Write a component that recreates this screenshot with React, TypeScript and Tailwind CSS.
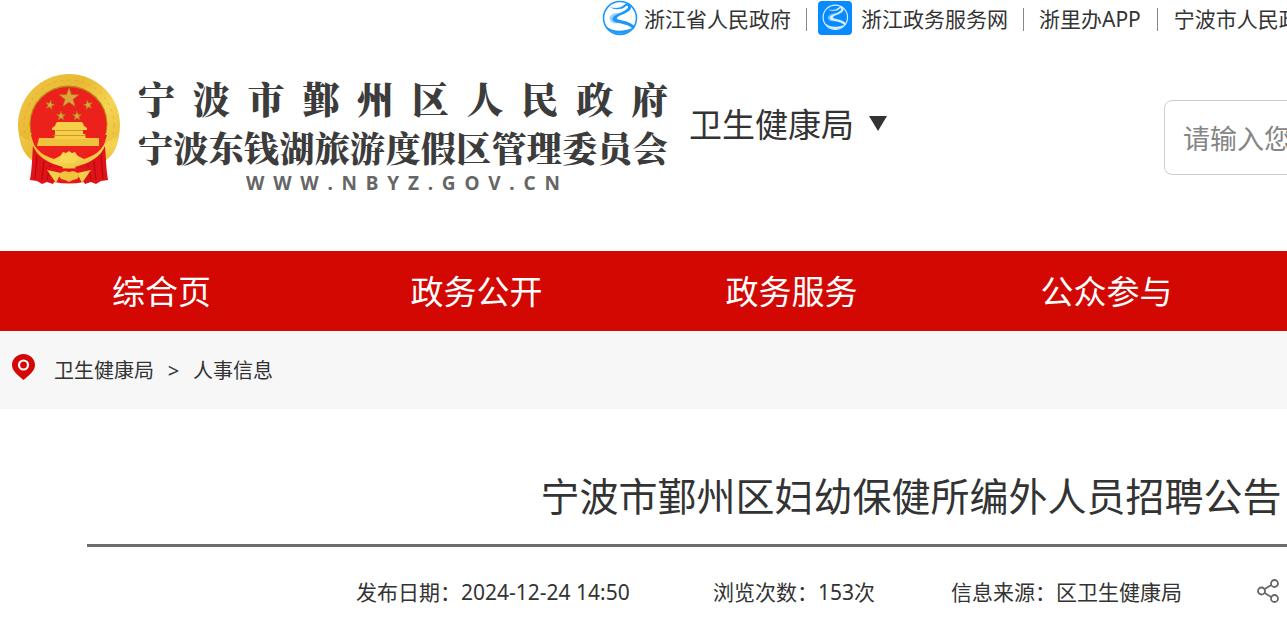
import React from 'react';

const star = (cx: number, cy: number, r: number, turn = 0) =>
  Array.from({ length: 10 }, (_, i) => {
    const a = ((i * 36 - 90 + turn) * Math.PI) / 180;
    const q = i % 2 ? r * 0.4 : r;
    return `${(cx + q * Math.cos(a)).toFixed(1)},${(cy + q * Math.sin(a)).toFixed(1)}`;
  }).join(' ');

function Emblem() {
  return (
    <svg viewBox="0 0 104 112" className="h-[112px] w-[104px] shrink-0" aria-hidden="true">
      <defs>
        <linearGradient id="gold" x1="0" y1="0" x2="1" y2="1">
          <stop offset="0" stopColor="#f0c84a" />
          <stop offset="0.35" stopColor="#e9b932" />
          <stop offset="0.6" stopColor="#f5d552" />
          <stop offset="1" stopColor="#e3b02e" />
        </linearGradient>
      </defs>
      <ellipse cx="52" cy="52" rx="51" ry="51" fill="url(#gold)" />
      <ellipse cx="52" cy="52" rx="45" ry="45" fill="none" stroke="#d39b25" strokeWidth="1" strokeDasharray="3 4" opacity="0.5" />
      <ellipse cx="51.500" cy="51" rx="39" ry="38.500" fill="#b98518" />
      <ellipse cx="51.500" cy="51.500" rx="38" ry="37.500" fill="#ec211b" />
      <path d="M14 62h76l-3 10c-7 12-18 17-35 17S25 84 17 72z" fill="#ec211b" />
      <path d="M22 65h60v8H20z" fill="#efc13c" />
      <path d="M38 61h30l1 5H37zM38 56h28v5H38zM35 55l4-3h27l4 3v2H35zM40 49h25l2 3H38z" fill="#f5ce4a" />
      <path d="M39 57.500h27M36 62.500h33" stroke="#c98b20" strokeWidth="0.800" />
      <path d="M2 62c2 14 6 20 14 26l10 3 12 5h8l6-3 6 3h8l12-5 10-3c8-6 12-12 14-26l-14 8c-4 8-11 13-21 16l-8-4-7-1-7 1-8 4c-10-3-17-8-21-16z" fill="url(#gold)" />
      <path d="M16 73c4 10 14 17 30 21l-10 17-6-2-5 2-5-3-7-1c2-11 2-22 3-34zM88 73c-4 10-14 17-30 21l10 17 6-2 5 2 5-3 7-1c-2-11-2-22-3-34z" fill="#df1318" />
      <path d="M20 82l-2 24M27 88l-2 19M33 92l-3 15M84 82l2 24M77 88l2 19M71 92l3 15" stroke="#b20b12" strokeWidth="1.200" />
      <path d="M31 94q21 3 42 0l-6 15q-15 3-30 0z" fill="#e4171a" />
      <path d="M30 97l14 3-5 10zM74 97l-14 3 5 10z" fill="#f2d04a" />
      <path d="M42 85l4-6 3 1 3-2 3 2 3-1 4 6-5 5h-10z" fill="#f7d754" />
      <path d="M41 102l4-3 3-1 4 1 4-1 3 1 4 3-3 4-4 1-4 2-4-2-4-1z" fill="#f2c33c" />
      <g fill="#dca43a" stroke="#b06b1b" strokeWidth="0.600">
        <polygon points={star(52, 25, 10.5)} />
        <polygon points={star(33, 32, 5, 12)} />
        <polygon points={star(71, 32, 5, -12)} />
        <polygon points={star(44, 43, 5)} />
        <polygon points={star(60, 43, 5)} />
      </g>
    </svg>
  );
}

function River({ color, fill }: { color: string; fill: string }) {
  return (
    <g>
      <circle cx="18" cy="18" r="16.500" fill={fill} stroke={color} strokeWidth="1.600" />
      <path
        d="M8 7C13 9 19 8 22 5c4-3 8-1 7 3-1 4-8 6-12 8-3 2-3 3 1 4 6 1 12 3 15 7l-2 2c-5-5-12-5-18-7-4-2-3-5 1-7 5-3 12-5 12-8 0-2-2-1-3 0-4 3-11 3-15 0z"
        fill={color}
      />
      <path d="M19 13C12 12 6 16 8 20c1 3 5 4 9 3-5-2-6-6 2-10z" fill={color} opacity="0.45" />
      <path d="M4 26c7 6 17 6 26 2-5 8-20 8-26-2z" fill={color} />
    </g>
  );
}

function Spread({ text, className }: { text: string; className: string }) {
  return (
    <span className={`flex justify-between ${className}`}>
      {Array.from(text).map((c, i) => (
        <span key={i}>{c}</span>
      ))}
    </span>
  );
}

const navItems = ['综合页', '政务公开', '政务服务', '公众参与'];

export default function App() {
  return (
    <div className="w-full overflow-hidden bg-white font-['Noto_Sans','Noto_Sans_CJK_SC',sans-serif] text-[#333]">
      <div className="flex h-[38px] items-center whitespace-nowrap pl-[602px] text-[21px] leading-9">
        <a href="#zj" className="flex shrink-0 items-center gap-1.5">
          <svg viewBox="0 0 36 36" className="-mt-0.5 size-9" aria-hidden="true">
            <River color="#1c98fa" fill="#fff" />
          </svg>
          浙江省人民政府
        </a>
        <span className="ml-[15px] mr-[11px] h-[23px] w-px shrink-0 bg-[#888]" />
        <a href="#zwfw" className="flex shrink-0 items-center gap-[9px]">
          <svg viewBox="0 0 34 34" className="-mt-0.5 size-[34px]" aria-hidden="true">
            <rect width="34" height="34" rx="4" fill="#088bff" />
            <g transform="translate(4 3) scale(.74)">
              <River color="#d9efff" fill="#088bff" />
            </g>
          </svg>
          浙江政务服务网
        </a>
        <span className="mx-[15px] h-[23px] w-px shrink-0 bg-[#888]" />
        <a href="#app" className="shrink-0">浙里办APP</a>
        <span className="mx-4 h-[23px] w-px shrink-0 bg-[#888]" />
        <a href="#nb" className="shrink-0">宁波市人民政府</a>
      </div>

      <header className="flex h-[213px] items-start pl-[17px] pt-0.5">
        <a href="#home" className="flex shrink-0 items-start gap-[17px] pt-[33px]">
          <Emblem />
          <span className="block w-[530px] font-['Noto_Serif_CJK_SC','Noto_Sans_CJK_SC',serif] font-black text-[#3c3c3c]">
            <Spread text="宁波市鄞州区人民政府" className="text-[37px] leading-[50px]" />
            <Spread text="宁波东钱湖旅游度假区管理委员会" className="text-[35px] leading-[48px]" />
            <Spread
              text="WWW.NBYZ.GOV.CN"
              className="mx-auto w-[314px] font-['Noto_Sans',sans-serif] text-[19px] font-bold leading-6 text-[#666]"
            />
          </span>
        </a>
        <button type="button" className="ml-[21px] mt-[61px] flex shrink-0 items-center gap-[15px] whitespace-nowrap text-[33px] leading-[48px]">
          卫生健康局
          <svg viewBox="0 0 18 15" className="-mt-1 h-[15px] w-[18px]" aria-hidden="true">
            <path d="M0 0h18L9 15z" fill="#333" />
          </svg>
        </button>
        <input
          type="text"
          aria-label="搜索"
          placeholder="请输入您要搜索的内容"
          className="ml-[277px] mt-[60px] h-[75px] w-[420px] shrink-0 rounded-lg border border-[#ccc] px-[18px] pt-0.5 text-[27px] placeholder:text-[#858585]"
        />
      </header>

      <nav className="flex h-20 bg-[#d30803] pl-1 text-[33px] leading-[82px] text-white">
        {navItems.map((item) => (
          <a key={item} href={`#${item}`} className="w-[315px] shrink-0 text-center">
            {item}
          </a>
        ))}
      </nav>

      <div className="flex h-[78px] items-center bg-[#f7f7f7] pl-3 text-[20px]">
        <svg viewBox="0 0 23 26" className="-mt-1.5 h-[26px] w-[23px] shrink-0" aria-hidden="true">
          <path d="M11.500 0C5 0 0 5 0 11c0 6 6 10 11.500 15C17 21 23 17 23 11 23 5 18 0 11.500 0z" fill="#d40606" />
          <circle cx="11.500" cy="11" r="4.500" fill="#d40606" stroke="#fff" strokeWidth="2.200" />
        </svg>
        <div className="flex pl-[19px] pt-0.5">
          <a href="#wjj">卫生健康局</a>
          <span className="w-[39px] text-center">&gt;</span>
          <a href="#rs">人事信息</a>
        </div>
      </div>

      <main className="ml-[87px] w-[1648px]">
        <h1 className="border-b-3 border-[#6e6c6c] pb-[21px] pt-[59px] text-center text-[39px] leading-[55px]">
          宁波市鄞州区妇幼保健所编外人员招聘公告
        </h1>
        <div className="flex h-[82px] items-center whitespace-nowrap pl-[269px] pt-2.5 text-[21px]">
          <span className="w-[357px]">发布日期：2024-12-24 14:50</span>
          <span className="w-[238px]">浏览次数：153次</span>
          <span className="w-[305px]">信息来源：区卫生健康局</span>
          <button type="button" aria-label="分享" className="-mt-1">
            <svg viewBox="0 0 23 24" className="size-6" fill="#fff" stroke="#666" strokeWidth="1.800" aria-hidden="true">
              <path d="M5 12l13-8M5 12l13 8" />
              <circle cx="5" cy="12" r="3.500" />
              <circle cx="18" cy="4.500" r="3.500" />
              <circle cx="18" cy="19.500" r="3.500" />
            </svg>
          </button>
        </div>
      </main>
    </div>
  );
}
